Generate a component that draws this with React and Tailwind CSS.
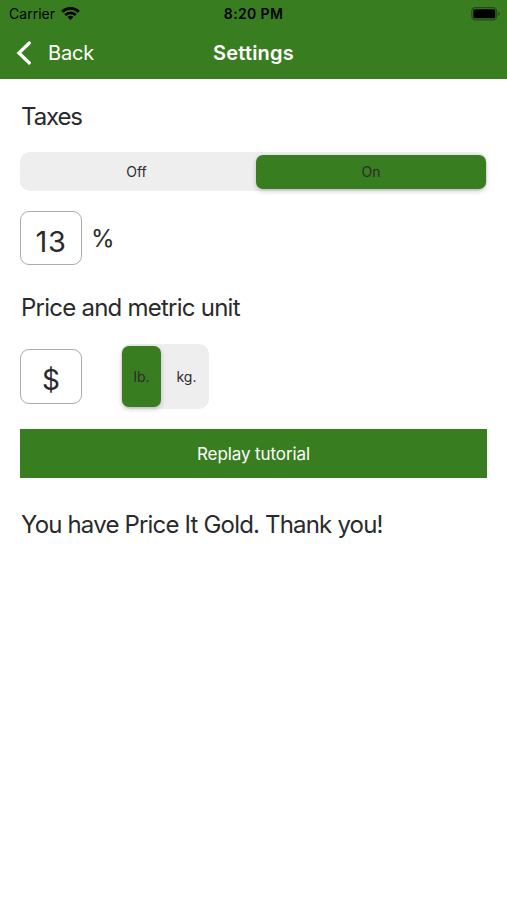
import { useState } from 'react';

function StatusBar() {
  return (
    <div className="grid h-[27px] grid-cols-3 items-center text-black">
      <div className="flex items-center gap-[6px] pl-[9px]">
        <span className="text-[14px] leading-none tracking-[0.02px]">Carrier</span>
        <svg className="h-[14px] w-[19px] shrink-0" viewBox="0 0 19 14" fill="none" stroke="currentColor" strokeWidth="2.7">
          <path d="M1.2 4.8a11.9 11.9 0 0 1 16.6 0" />
          <path d="M4.2 8a7.6 7.6 0 0 1 10.6 0" />
          <path d="M9.5 13L6.6 10.1a4 4 0 0 1 5.8 0z" fill="currentColor" stroke="none" />
        </svg>
      </div>
      <span className="text-center text-[14px] leading-none font-semibold tracking-[0.35px]">8:20 PM</span>
      <div className="flex justify-end pr-[6px]">
        <svg className="h-[14px] w-[30px]" viewBox="0 0 30 14">
          <rect x="0.8" y="0.7" width="24.8" height="12.2" rx="3.6" fill="none" stroke="#000" strokeOpacity="0.4" strokeWidth="1.2" />
          <rect x="2.3" y="2.3" width="22" height="9" rx="1.6" fill="#000" />
          <path d="M27.2 4.8v4c1-.4 1.5-1.1 1.5-2s-.5-1.6-1.5-2z" fill="#000" fillOpacity="0.4" />
        </svg>
      </div>
    </div>
  );
}

function NavBar() {
  return (
    <div className="grid h-[51px] grid-cols-3 items-center text-white">
      <button className="flex items-center gap-[16px] pl-[16px]">
        <svg className="h-[24px] w-[16px]" viewBox="0 0 16 24" fill="none" stroke="currentColor" strokeWidth="3.2" strokeLinecap="round">
          <path d="M13.3 2L2.9 12L13.3 22" />
        </svg>
        <span className="text-[20px] leading-none tracking-[-0.2px]">Back</span>
      </button>
      <h1 className="text-center text-[20px] leading-none font-semibold tracking-[0.2px]">Settings</h1>
    </div>
  );
}

function Segment({ label, selected, onClick }) {
  return (
    <button
      onClick={onClick}
      className={
        selected
          ? 'rounded-[7px] bg-[#397d21] text-center shadow-[0_2px_5px_rgba(0,0,0,0.22)]'
          : 'rounded-[7px] text-center'
      }
    >
      {label}
    </button>
  );
}

export default function App() {
  const [taxes, setTaxes] = useState(true);
  const [unit, setUnit] = useState('lb');

  return (
    <div className="min-h-screen bg-white font-['Inter','Liberation_Sans',sans-serif] text-[#2a2a2c]">
      <header className="h-[79px] bg-[#397d21]">
        <StatusBar />
        <NavBar />
      </header>

      <main className="pr-[20px] pl-[20px]">
        <h2 className="mt-[22px] h-[32px] pl-[1px] text-[24px] leading-[32px] tracking-[-1.1px]">Taxes</h2>

        <div className="mt-[19px] grid h-[39px] grid-cols-[1fr_230px] gap-1 rounded-[10px] bg-[#eeeeee] pt-[3px] pr-[1px] pb-[2px] pl-[1px] text-[14px] leading-[18px]">
          <Segment label="Off" selected={!taxes} onClick={() => setTaxes(false)} />
          <Segment label="On" selected={taxes} onClick={() => setTaxes(true)} />
        </div>

        <div className="mt-[20px] flex h-[54px] items-center gap-[9px]">
          <div className="h-[54px] w-[62px] rounded-[9px] border border-[#acacac] pt-[6px] text-center text-[29px] leading-[47px] tracking-[0.6px]">
            13
          </div>
          <span className="pt-[2px] text-[24px] leading-[54px]">%</span>
        </div>

        <h2 className="mt-[27px] h-[32px] pl-[1px] text-[24px] leading-[32px] tracking-[-0.76px]">Price and metric unit</h2>

        <div className="mt-[20px] flex h-[65px] items-center gap-[39px]">
          <div className="h-[55px] w-[62px] rounded-[9px] border border-[#acacac] pt-[7px] text-center text-[28px] leading-[47px]">
            $
          </div>
          <div className="grid h-[65px] w-[88px] grid-cols-[39px_1fr] gap-1 rounded-[10px] bg-[#eeeeee] py-[2px] pr-[1px] pl-[1px] text-[14px]">
            <Segment label="lb." selected={unit === 'lb'} onClick={() => setUnit('lb')} />
            <Segment label="kg." selected={unit === 'kg'} onClick={() => setUnit('kg')} />
          </div>
        </div>

        <button className="mt-[20px] h-[49px] w-full bg-[#397d21] pt-[2px] text-[17px] tracking-[-0.1px] text-white">
          Replay tutorial
        </button>

        <p className="mt-[31px] pl-[1px] text-[24px] leading-[32px] tracking-[-0.82px]">You have Price It Gold. Thank you!</p>
      </main>
    </div>
  );
}
